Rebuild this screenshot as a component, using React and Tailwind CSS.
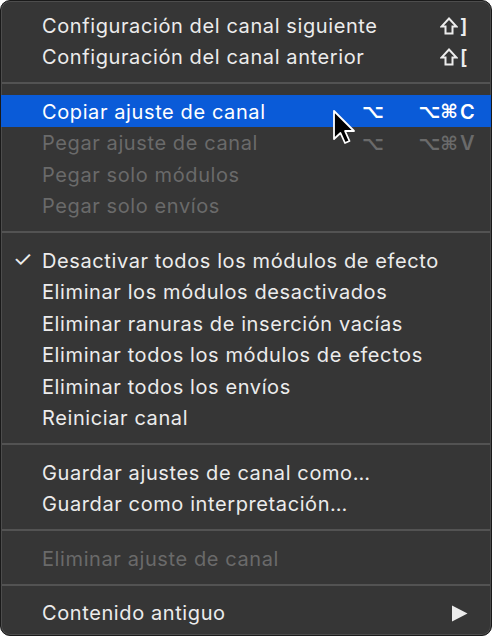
import React from 'react';

// Menú contextual de canal (estilo macOS, modo oscuro)
const sections = [
  [
    { label: 'Configuración del canal siguiente', mods: 'shift', key: ']' },
    { label: 'Configuración del canal anterior', mods: 'shift', key: '[' },
  ],
  [
    { label: 'Copiar ajuste de canal', mid: '⌥', mods: '⌥⌘', key: 'C', active: true },
    { label: 'Pegar ajuste de canal', mid: '⌥', mods: '⌥⌘', key: 'V', disabled: true },
    { label: 'Pegar solo módulos', disabled: true },
    { label: 'Pegar solo envíos', disabled: true },
  ],
  [
    { label: 'Desactivar todos los módulos de efecto', checked: true },
    { label: 'Eliminar los módulos desactivados' },
    { label: 'Eliminar ranuras de inserción vacías' },
    { label: 'Eliminar todos los módulos de efectos' },
    { label: 'Eliminar todos los envíos' },
    { label: 'Reiniciar canal' },
  ],
  [
    { label: 'Guardar ajustes de canal como…' },
    { label: 'Guardar como interpretación…' },
  ],
  [{ label: 'Eliminar ajuste de canal', disabled: true }],
  [{ label: 'Contenido antiguo', submenu: true }],
];

const Cursor = () => (
  <svg
    className="absolute left-[331px] top-[108px]"
    width="28"
    height="38"
    viewBox="0 0 28 38"
  >
    <path
      d="M2 2 L2 30 L8.5 24 L13 34 L17.5 32 L13 22 L22 22 Z"
      fill="#000"
      stroke="#fff"
      strokeWidth="1.8"
      strokeLinejoin="round"
    />
  </svg>
);

// Flecha de mayúsculas dibujada (⇧)
const ShiftIcon = () => (
  <svg width="18" height="18" viewBox="0 0 18 18" className="inline-block">
    <path
      d="M9 1.5 L16.5 9.5 L12.5 9.5 L12.5 16.5 L5.5 16.5 L5.5 9.5 L1.5 9.5 Z"
      fill="none"
      stroke="#ececec"
      strokeWidth="2"
      strokeLinejoin="miter"
    />
  </svg>
);

const MenuRow = ({ item }) => {
  const color = item.disabled ? 'text-[#6a6a6a]' : 'text-[#ececec]';
  return (
    <div
      className={`relative flex items-center h-[31.5px] pt-[2px] pl-[41px] pr-[15px] ${
        item.active ? 'bg-[#0a5bd8] text-white' : color
      }`}
    >
      {item.checked && (
        <span className="absolute left-[12px] top-[4px] text-[22px] leading-none">✓</span>
      )}
      <span className="whitespace-nowrap text-[20px] leading-none tracking-[0.6px]">
        {item.label}
      </span>
      {item.mods && (
        <div
          className="ml-auto flex shrink-0 items-center text-[19px] font-bold leading-none"
          style={{ fontFamily: '"DejaVu Sans", sans-serif' }}
        >
          {item.mid && <span className="w-[60px] shrink-0 pl-[6px]">{item.mid}</span>}
          <span className="w-[42px] shrink-0 flex justify-end">
            {item.mods === 'shift' ? <ShiftIcon /> : item.mods}
          </span>
          <span
            className="w-[18px] shrink-0 pl-[2px] text-[20px] font-semibold"
            style={{ fontFamily: 'Inter, sans-serif' }}
          >
            {item.key}
          </span>
        </div>
      )}
      {item.submenu && (
        <svg className="ml-auto mr-[8px]" width="17" height="17" viewBox="0 0 17 17">
          <path d="M1 0.5 L16.5 8.5 L1 16.5 Z" fill="#ececec" />
        </svg>
      )}
    </div>
  );
};

const Separator = () => (
  <div className="pt-[10px] pb-[11px] px-[1px]">
    <div className="h-[2px] bg-[#535353]" />
  </div>
);

export default function App() {
  return (
    <div className="w-[492px] h-[636px] bg-white">
      <div
        className="relative w-[492px] h-[636px] rounded-[10px] border border-[#1a1a1a] bg-[#363636] pt-[8px] overflow-hidden shadow-[inset_0_0_0_1px_#4d4d4d]"
        style={{ fontFamily: 'Inter, "Noto Sans", sans-serif' }}
      >
        {sections.map((items, i) => (
          <div key={i}>
            {i > 0 && <Separator />}
            {items.map((item) => (
              <MenuRow key={item.label} item={item} />
            ))}
          </div>
        ))}
        <Cursor />
      </div>
    </div>
  );
}
